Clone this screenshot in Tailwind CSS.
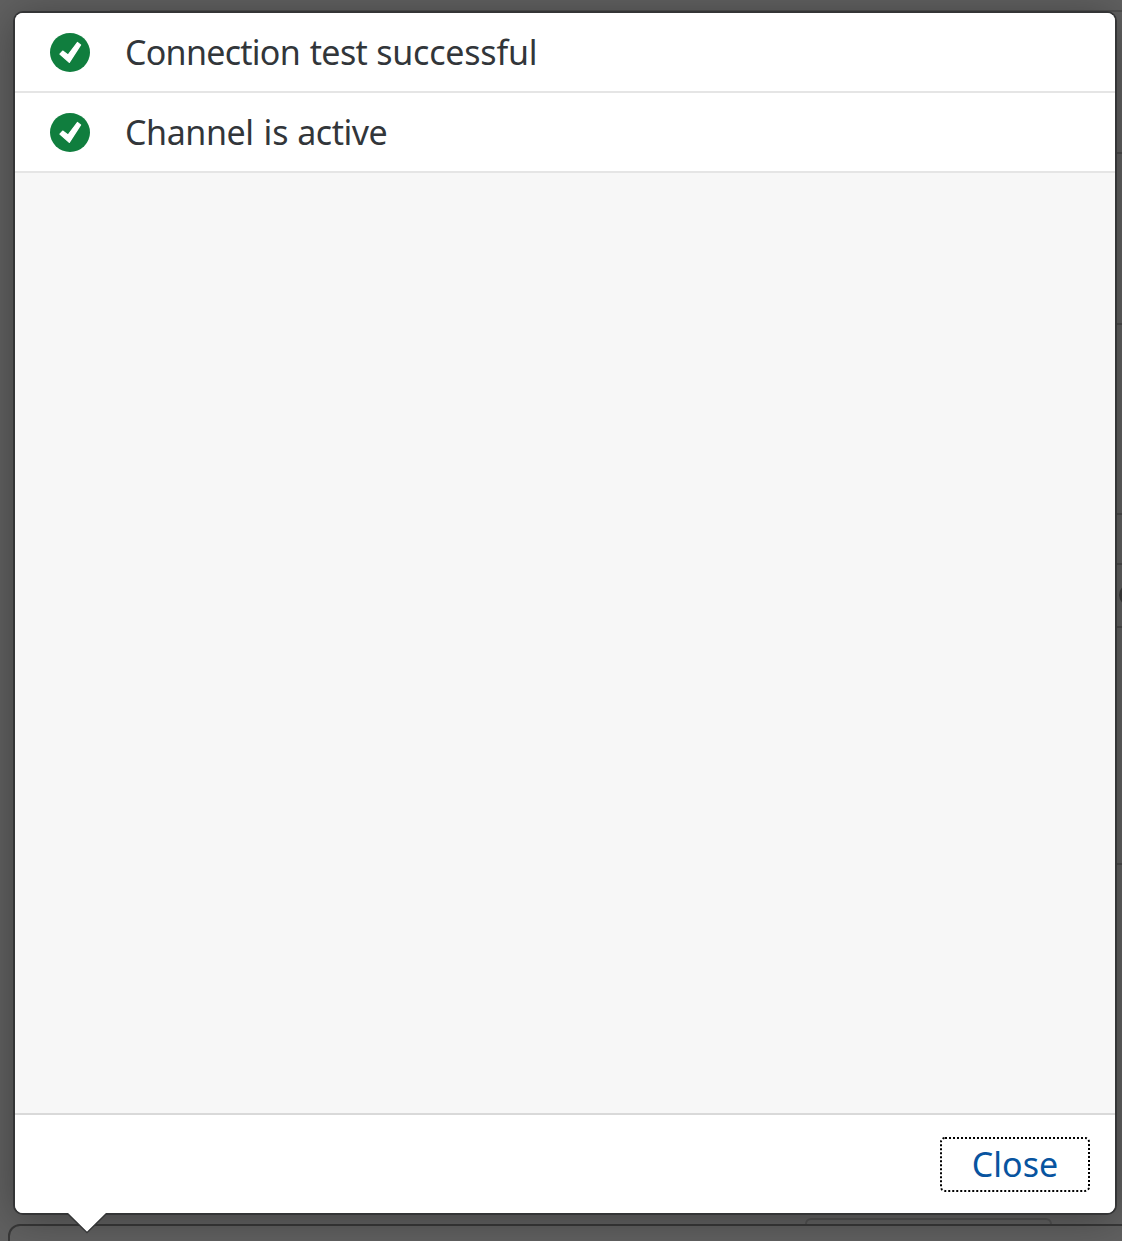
<!DOCTYPE html>
<html lang="en">
<head>
<meta charset="utf-8">
<title>Connection test</title>
<script src="https://cdn.jsdelivr.net/npm/@tailwindcss/browser@4"></script>
</head>
<body class="relative h-[1241px] w-[1122px] overflow-hidden bg-[#606060] font-['Noto_Sans',sans-serif]">
  <!-- Dimmed page behind the popover -->
  <div class="absolute inset-0">
    <div class="absolute left-[110px] right-0 top-[10px] h-[2px] bg-[#505050]"></div>
    <div class="absolute right-0 top-[152px] h-[2px] w-2 bg-[#4b4b4b]"></div>
    <div class="absolute right-0 top-[323px] h-[2px] w-2 bg-[#4b4b4b]"></div>
    <div class="absolute right-0 top-[513px] h-[2px] w-2 bg-[#4b4b4b]"></div>
    <div class="absolute right-0 top-[563px] h-[2px] w-2 bg-[#4b4b4b]"></div>
    <div class="absolute left-[1119px] top-[584px] h-[22px] w-[22px] rounded-full bg-[#3b3b3b]"></div>
    <div class="absolute right-0 top-[626px] h-[2px] w-2 bg-[#4b4b4b]"></div>
    <div class="absolute right-0 top-[863px] h-[2px] w-2 bg-[#4b4b4b]"></div>
    <div class="absolute left-[805px] top-[1218px] h-8 w-[247px] rounded-md border-2 border-[#505050]"></div>
    <div class="absolute -right-4 left-2 top-[1224px] h-10 rounded-xl border-2 border-[#383838] bg-[#606060]"></div>
  </div>

  <main class="relative ml-[15px] mt-[13px] flex h-[1200px] w-[1100px] flex-col rounded-lg bg-[#f7f7f7] shadow-[0_0_0_2px_#343536,0_4px_40px_0_rgba(0,0,0,0.35)]">
    <ul class="text-[34px] leading-none text-[#32363a]">
      <li class="flex h-20 items-center rounded-t-lg border-b-2 border-[#e5e5e5] bg-white pl-[35px]">
        <svg class="h-10 w-10 shrink-0" viewBox="0 0 40 40"><ellipse cx="20" cy="20.4" rx="20" ry="19.5" fill="#107e3e"/><path d="M9.9 22.1 12.7 19.1 18 23.1 27.4 10.5 30.6 12.9 19.3 30.4Z" fill="#fff" stroke="#fff" stroke-width="1.2" stroke-linejoin="round"/></svg>
        <span class="ml-[35px] whitespace-nowrap"><span class="tracking-[-0.72px]">Connection</span><span class="tracking-[0.8px]"> </span><span class="tracking-[-0.6px]">test</span> <span class="tracking-[-0.2px]">successful</span></span>
      </li>
      <li class="flex h-20 items-center border-b-2 border-[#e5e5e5] bg-white pl-[35px]">
        <svg class="h-10 w-10 shrink-0" viewBox="0 0 40 40"><ellipse cx="20" cy="20.4" rx="20" ry="19.5" fill="#107e3e"/><path d="M9.9 22.1 12.7 19.1 18 23.1 27.4 10.5 30.6 12.9 19.3 30.4Z" fill="#fff" stroke="#fff" stroke-width="1.2" stroke-linejoin="round"/></svg>
        <span class="ml-[35px] whitespace-nowrap"><span class="tracking-[-0.4px]">Channel</span><span class="tracking-[0.8px]"> </span><span>is</span> <span class="tracking-[-0.5px]">active</span></span>
      </li>
    </ul>
    <footer class="mt-auto flex h-[100px] items-center justify-end rounded-b-lg border-t-2 border-[#d9d9d9] bg-white pr-[25px]">
      <button class="flex h-[55px] w-[150px] items-center justify-center rounded-[5px] border-2 border-dotted border-black text-[34px] leading-none text-[#0854a0]">Close</button>
    </footer>
    <svg class="absolute left-[50px] top-[1200px] h-[22px] w-[44px]" viewBox="0 0 44 22"><path d="M2 0 22 19.5 42 0" fill="#fff" stroke="#343536" stroke-width="1.6"/><path d="M2.5 -1H41.5L22 18.5Z" fill="#fff"/></svg>
  </main>
</body>
</html>
